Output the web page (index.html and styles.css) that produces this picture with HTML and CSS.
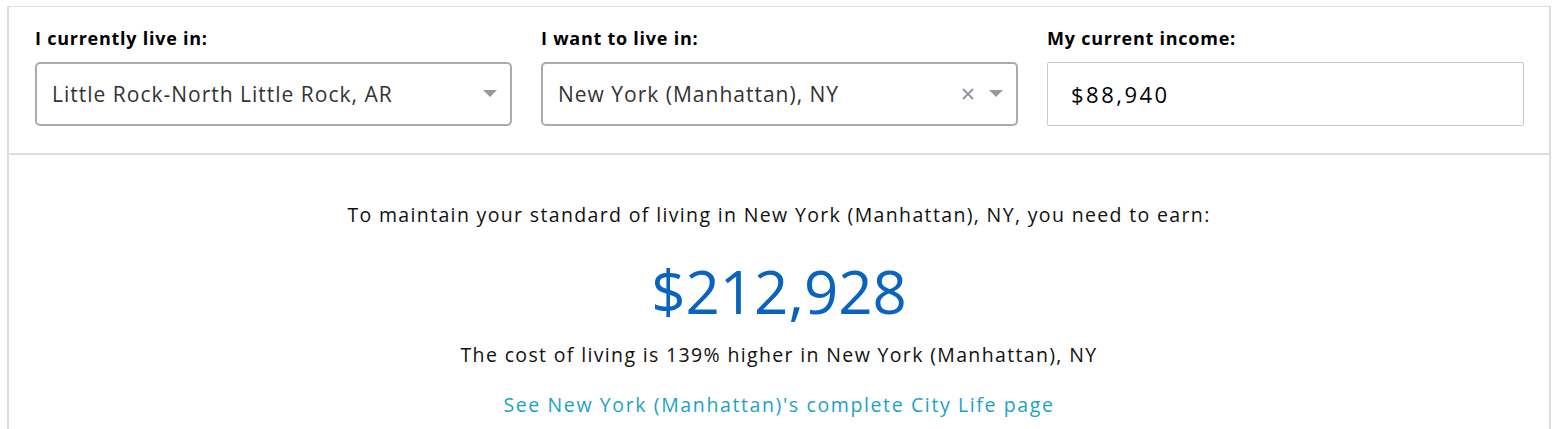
FILE: index.html
```html
<!DOCTYPE html>
<html lang="en">
<head>
<meta charset="utf-8">
<title>Cost of living calculator</title>
<link rel="stylesheet" href="styles.css">
</head>
<body>
<div class="calc">
  <div class="fields">
    <div class="field">
      <label class="label">I currently live in:</label>
      <div class="select">
        <span class="value">Little Rock-North Little Rock, AR</span>
        <span class="controls">
          <svg class="arrow" width="14" height="8" viewBox="0 0 14 8"><path d="M0 0 L14 0 L7 7 Z" fill="#999"/></svg>
        </span>
      </div>
    </div>
    <div class="field">
      <label class="label">I want to live in:</label>
      <div class="select">
        <span class="value">New York (Manhattan), NY</span>
        <span class="controls">
          <svg class="clear" width="12" height="12" viewBox="0 0 12 12"><path d="M1 1 L11 11 M11 1 L1 11" stroke="#8f97a3" stroke-width="1.8" fill="none"/></svg>
          <svg class="arrow" width="14" height="8" viewBox="0 0 14 8"><path d="M0 0 L14 0 L7 7 Z" fill="#999"/></svg>
        </span>
      </div>
    </div>
    <div class="field">
      <label class="label">My current income:</label>
      <div class="input">$88,940</div>
    </div>
  </div>
  <div class="result">
    <p class="intro">To maintain your standard of living in New York (Manhattan), NY, you need to earn:</p>
    <p class="amount">$212,928</p>
    <p class="diff">The cost of living is 139% higher in New York (Manhattan), NY</p>
    <a class="link" href="#">See New York (Manhattan)'s complete City Life page</a>
  </div>
</div>
</body>
</html>
```

FILE: styles.css
```css
html, body {
  margin: 0;
  padding: 0;
  background: #fff;
}
body {
  padding: 6px 8px 0 7px;
  font-family: "Open Sans", "Liberation Sans", sans-serif;
  color: #000;
}
.calc {
  border: 2px solid #dddddd;
  border-top-width: 1px;
  border-bottom: none;
  width: 1540px;
  box-sizing: content-box;
}
.fields {
  display: grid;
  grid-template-columns: 477px 477px 477px;
  column-gap: 29px;
  padding: 21px 26px 27px 26px;
  border-bottom: 2px solid #dddddd;
}
.field {
  display: flex;
  flex-direction: column;
}
.label {
  font-weight: 700;
  font-size: 18px;
  letter-spacing: 0.75px;
  line-height: 20px;
  margin-bottom: 14px;
  color: #000;
}
.select {
  height: 64px;
  box-sizing: border-box;
  border: 2px solid #ababab;
  border-radius: 5px;
  display: flex;
  align-items: center;
  padding: 0 13px 0 15px;
}
.value {
  flex: 1;
  font-size: 21px;
  letter-spacing: 1px;
  color: #333;
}
.controls {
  display: flex;
  align-items: center;
  gap: 15px;
}
.input {
  height: 64px;
  box-sizing: border-box;
  border: 1px solid #c8ccd0;
  border-radius: 2px;
  display: flex;
  align-items: center;
  padding: 0 23px;
  font-size: 22px;
  letter-spacing: 2.5px;
  color: #000;
}
.result {
  text-align: center;
  padding: 48px 0 0 0;
  height: 274px;
  box-sizing: border-box;
}
.intro {
  margin: 0;
  font-size: 19.5px;
  letter-spacing: 1.35px;
  line-height: 24px;
  color: #111;
}
.amount {
  margin: 28px 0 0 0;
  font-size: 60px;
  line-height: 72px;
  color: #0a63bf;
}
.diff {
  margin: 16px 0 0 0;
  font-size: 19.5px;
  letter-spacing: 1.35px;
  line-height: 24px;
  color: #111;
}
.link {
  display: inline-block;
  margin-top: 26px;
  font-size: 19.5px;
  letter-spacing: 1.62px;
  line-height: 24px;
  color: #1ca2c6;
  text-decoration: none;
}
```
